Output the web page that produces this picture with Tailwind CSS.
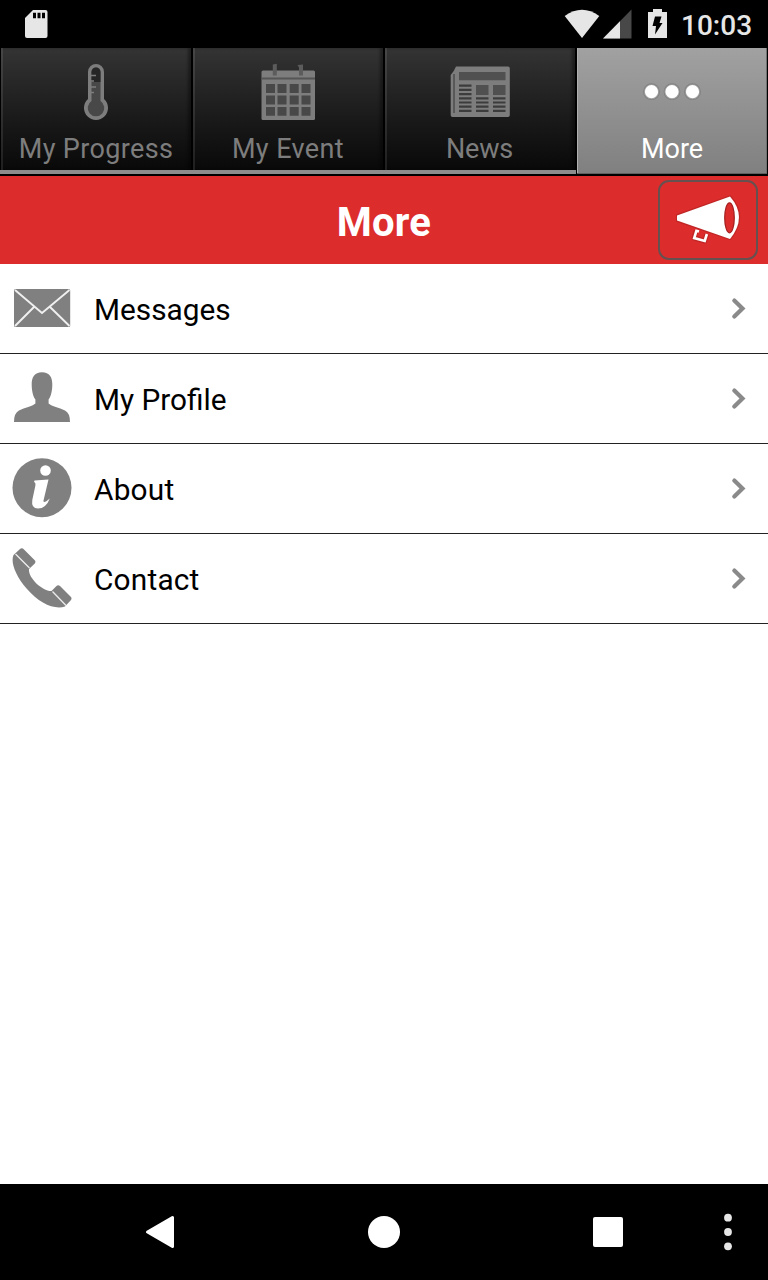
<!DOCTYPE html>
<html lang="en">
<head>
<meta charset="utf-8">
<title>More</title>
<script src="https://cdn.jsdelivr.net/npm/@tailwindcss/browser@4"></script>
</head>
<body class="bg-white">
<div class="flex h-[1280px] w-[768px] flex-col overflow-hidden bg-white font-['Roboto',sans-serif]">
  <header class="flex h-12 shrink-0 items-center bg-black pl-6 pr-4">
    <svg class="h-12 w-6" viewBox="24 0 24 48"><path fill="#e6e6e6" d="M33 10H45.500Q47.500 10 47.500 12V36Q47.500 38 45.500 38H27Q25 38 25 36V18Z"/><path d="M33 12.700h3v5.600h-3zM37.500 12.700h3v5.600h-3zM42 12.700h3v5.600h-3z"/></svg>
    <svg class="ml-auto h-12 w-[108px]" viewBox="562 0 108 48"><path fill="#e6e6e6" d="M564.700 16Q582 3.500 599.300 16L582 38Z"/><path fill="#484848" d="M631.500 9.500V38.500H603Z"/><path fill="#e6e6e6" d="M620 21.200V38.500H603Z"/><path fill="#e6e6e6" d="M653 9h9v3h5v26h-19V12h5z"/><path d="M655 16.500h6.500l-2 6.500h3l-7.500 11.500 1-8.500h-3.500z"/></svg>
    <span class="ml-[11px] mt-[3px] w-[71px] whitespace-nowrap text-[28px] leading-8 font-medium text-[#e6e6e6]">10:03</span>
  </header>

  <nav class="grid h-32 shrink-0 grid-cols-4 bg-black text-[27px] leading-8 text-[#7d7d7d]">
    <div class="mb-0.5 flex flex-col border-b-4 border-[#8c8c8c]">
      <div class="flex grow flex-col items-center border-x border-black bg-linear-to-b from-[#343434] to-[#090909] pt-3 shadow-[inset_2px_0_0_#ffffff18,inset_-3px_0_3px_#00000060]">
        <svg class="size-16" viewBox="64 60 64 64"><path fill="#7d7d7d" d="M88 72a8 8 0 0 1 16 0V99a12 12 0 1 1-16 0Z"/><path fill="#484848" d="M91.500 72a4.500 4.500 0 0 1 9 0V101a8.300 8.300 0 1 1-9 0Z"/><path fill="#262626" d="M91.500 72a4.500 4.500 0 0 1 9 0V82h-9Z"/><path stroke="#7d7d7d" stroke-width="1.600" d="M91 75.500h5M91 81h3M91 87h5M91 92.500h3"/></svg>
        <span class="mt-[9px] whitespace-nowrap tracking-[0.35px]">My Progress</span>
      </div>
    </div>
    <div class="mb-0.5 flex flex-col border-b-4 border-[#8c8c8c]">
      <div class="flex grow flex-col items-center border-x border-black bg-linear-to-b from-[#343434] to-[#090909] pt-3 shadow-[inset_2px_0_0_#ffffff18,inset_-3px_0_3px_#00000060]">
        <svg class="size-16" viewBox="256 60 64 64"><rect x="261.500" y="70.500" width="53.500" height="49.500" rx="1.500" fill="#7d7d7d"/><path stroke="#555" stroke-width="1.800" d="M262 78.500h53"/><path fill="#484848" d="M266 84h9v9h-9zM277.500 84h9v9h-9zM289.700 84h9v9h-9zM301.500 84h9v9h-9zM266 95.500h9v9h-9zM277.500 95.500h9v9h-9zM289.700 95.500h9v9h-9zM301.500 95.500h9v9h-9zM266 107h9v8.700h-9zM277.500 107h9v8.700h-9zM289.700 107h9v8.700h-9zM301.500 107h9v8.700h-9z"/><path fill="#5c5c5c" d="M272.800 64.500l4-.7v11.700h-4zM297.500 65l5.500-.5v11h-4v-8z"/></svg>
        <span class="mt-[9px] whitespace-nowrap tracking-[0.4px]">My Event</span>
      </div>
    </div>
    <div class="mb-0.5 flex flex-col border-b-4 border-[#8c8c8c]">
      <div class="flex grow flex-col items-center border-x border-black bg-linear-to-b from-[#343434] to-[#090909] pt-3 shadow-[inset_2px_0_0_#ffffff18,inset_-3px_0_3px_#00000060]">
        <svg class="size-16" viewBox="448 60 64 64"><path fill="#7d7d7d" d="M456 66.500h52q1.800 0 1.800 1.800v47q0 1.800-1.800 1.800h-55.500q-1.800 0-1.800-1.800V75l3-4z"/><path stroke="#505050" stroke-width="1.600" d="M454 74v39"/><path fill="#505050" d="M459 72h46.500v8.300H459zM476 85h12.500v10H476zM493 85h12.500v10H493z"/><path stroke="#3c3c3c" stroke-width="2.200" d="M459 85.700h12.500M459 89.900h12.500M459 94.100h12.500M459 98.300h12.500M459 102.500h12.500M459 106.700h12.500M459 110.900h12.500M476 98.300h12.500M476 102.500h12.500M476 106.700h12.500M476 110.900h12.500M493 98.300h12.500M493 102.500h12.500M493 106.700h12.500M493 110.900h12.500"/></svg>
        <span class="mt-[9px] mr-px whitespace-nowrap tracking-[-0.2px]">News</span>
      </div>
    </div>
    <div class="mb-0.5 ml-px mr-px flex flex-col items-center border-b border-[#5f5f5f] bg-linear-to-b from-[#a1a1a1] to-[#808080] pt-3 text-white shadow-[inset_1px_0_0_#b0b0b0,inset_-1px_0_0_#707070]">
      <svg class="size-16" viewBox="640 60 64 64"><g fill="#fff" stroke="#777" stroke-opacity=".7" stroke-width="1.800"><circle cx="651.500" cy="91.700" r="7.500"/><circle cx="672" cy="91.700" r="7.500"/><circle cx="692.500" cy="91.700" r="7.500"/></g></svg>
      <span class="mt-[9px] whitespace-nowrap">More</span>
    </div>
  </nav>

  <div class="grid h-[88px] shrink-0 grid-cols-[1fr_auto_1fr] items-center bg-[#dd2c2c]">
    <h1 class="col-start-2 mt-1.5 text-[40px] leading-[48px] font-bold tracking-[0.2px] text-white">More</h1>
    <button class="mr-2.5 flex h-20 w-[100px] items-center justify-center justify-self-end rounded-[11px] border-2 border-[#675050]">
      <svg class="h-[76px] w-24" viewBox="660 182 96 76"><g fill="none" stroke="#a52020" stroke-opacity=".5" stroke-width="3" stroke-linejoin="round"><path d="M677.500 215.500L730 196.800Q747.500 217 730 238.500L677.500 220.500Z"/><path stroke-width="5" d="M696.200 230.500l-2.200 7.500 10.700 3 2.200-7"/></g><path fill="#fff" d="M677 215.500L730 196.500Q748 217 730 239L677 220.500Z"/><ellipse cx="729.500" cy="217.800" rx="4.800" ry="15" fill="#dd2c2c" stroke="#a52020" stroke-width="1.200"/><path fill="none" stroke="#fff" stroke-width="2.600" d="M699 231.500l-2.600-.7-2.200 7.200 10.500 3 2.200-7"/></svg>
    </button>
  </div>

  <main class="flex grow flex-col text-[29.8px] leading-9 text-black">
    <div class="flex h-[90px] items-center border-b border-[#222] pl-3 pr-[22px]">
      <svg class="mb-0.5 h-[60px] w-[60px]" viewBox="12 278 60 60"><rect x="14" y="289" width="56.200" height="38" rx="1.500" fill="#808080"/><path fill="none" stroke="#fff" stroke-opacity=".88" stroke-width="1.900" d="M15 290L42 313 69.500 290M15 326L34 307M69.500 326L50 307"/></svg>
      <span class="ml-[22px] mt-0.5">Messages</span>
      <svg class="ml-auto h-6 w-4" viewBox="730 297 16 24"><path fill="none" stroke="#8a8a8a" stroke-linecap="round" stroke-width="4.200" d="M734.300 300.600L742.500 308.500 734.300 316.600"/></svg>
    </div>
    <div class="flex h-[90px] items-center border-b border-[#222] pl-3 pr-[22px]">
      <svg class="mb-0.5 h-[60px] w-[60px]" viewBox="12 368 60 60"><path fill="#808080" d="M42 372.200C49.500 372.200 52.500 377 52.300 385C52.200 392 50.500 397 48.600 399.500V403.500C52 406.500 59 407.500 65 410.500Q70 413 70 422H14Q14 413 19 410.500C25 407.500 32 406.500 35.400 403.500V399.500C33.500 397 31.800 392 31.700 385C31.500 377 34.500 372.200 42 372.200Z"/></svg>
      <span class="ml-[22px] mt-0.5">My Profile</span>
      <svg class="ml-auto h-6 w-4" viewBox="730 297 16 24"><path fill="none" stroke="#8a8a8a" stroke-linecap="round" stroke-width="4.200" d="M734.300 300.600L742.500 308.500 734.300 316.600"/></svg>
    </div>
    <div class="flex h-[90px] items-center border-b border-[#222] pl-3 pr-[22px]">
      <svg class="mb-0.5 h-[60px] w-[60px]" viewBox="12 458 60 60"><circle cx="42" cy="487.700" r="29.500" fill="#808080"/><circle cx="45.500" cy="470.500" r="5.300" fill="#fff"/><path fill="#fff" d="M34.500 480.500L48.500 479.500L43.500 500.500Q43 504.500 49.800 498.500Q46 508.500 38 508.500Q31 508.500 32.300 500L35.300 486Q36 482.500 34 482Z"/></svg>
      <span class="ml-[22px] mt-0.5 tracking-[0.2px]">About</span>
      <svg class="ml-auto h-6 w-4" viewBox="730 297 16 24"><path fill="none" stroke="#8a8a8a" stroke-linecap="round" stroke-width="4.200" d="M734.300 300.600L742.500 308.500 734.300 316.600"/></svg>
    </div>
    <div class="flex h-[90px] items-center border-b border-[#222] pl-3 pr-[22px]">
      <svg class="mb-0.5 h-[60px] w-[60px]" viewBox="12 548 60 60"><path fill="#808080" d="M20 549Q22 547.500 24 549.500L35 560.500Q36 562 34.800 563.500L29 569C28 577 41 590.500 51.500 591L56.500 586Q58 584.500 60 586L71 597Q72 598.500 71 600L65 606.500C54 610 39 603 27 589C15 575 10.500 562 13.500 555Z"/><path stroke="#fff" stroke-opacity=".85" stroke-width="1.300" d="M15.500 554L29.500 568M52.500 591.500L66 605.500"/></svg>
      <span class="ml-[22px] mt-0.5 tracking-[0.2px]">Contact</span>
      <svg class="ml-auto h-6 w-4" viewBox="730 297 16 24"><path fill="none" stroke="#8a8a8a" stroke-linecap="round" stroke-width="4.200" d="M734.300 300.600L742.500 308.500 734.300 316.600"/></svg>
    </div>
  </main>

  <footer class="h-24 shrink-0 bg-black">
    <svg class="h-24 w-full" viewBox="0 1184 768 96"><path fill="#fff" stroke="#fff" stroke-width="3" stroke-linejoin="round" d="M172.500 1217.500V1246.500L147.500 1232Z"/><circle cx="384" cy="1232" r="16" fill="#fff"/><rect x="593" y="1217" width="30" height="30" rx="2" fill="#fff"/><g fill="#e6e6e6"><circle cx="728" cy="1217.700" r="3.900"/><circle cx="728" cy="1232" r="3.900"/><circle cx="728" cy="1246.300" r="3.900"/></g></svg>
  </footer>
</div>
</body>
</html>
